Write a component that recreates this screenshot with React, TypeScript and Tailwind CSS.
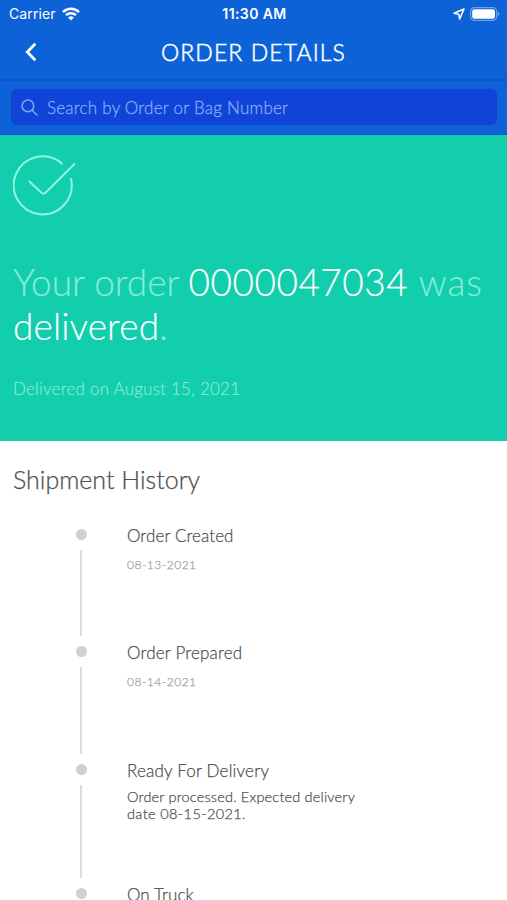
const events = [
  { title: "Order Created", date: "08-13-2021", height: "h-[117px]", tracking: "tracking-[0.1px]" },
  { title: "Order Prepared", date: "08-14-2021", height: "h-[118px]", tracking: "tracking-[0.18px]" },
  {
    title: "Ready For Delivery",
    note: [
      { text: "Order processed. Expected delivery", tracking: "tracking-[0.19px]" },
      { text: "date 08-15-2021.", tracking: "tracking-[0.38px]" },
    ],
    height: "h-[124px]",
    tracking: "tracking-[0.2px]",
  },
  { title: "On Truck", height: "h-[117px]", tracking: "tracking-[0.1px]" },
]

function StatusBar() {
  return (
    <div className="grid h-[27px] grid-cols-3 items-center pr-[7px] pl-[9px] font-['Inter','Liberation_Sans',sans-serif] text-white">
      <div className="flex items-center gap-[6px]">
        <span className="text-[14px] leading-[18px] tracking-[0.1px]">Carrier</span>
        <svg width="18" height="14" viewBox="0 0 18 14" fill="none" stroke="currentColor" strokeWidth="2.5">
          <path d="M1 5.1a11.4 11.4 0 0 1 16 0" />
          <path d="M4 8.2a7.2 7.2 0 0 1 10 0" />
          <path d="M9 13.5 6.2 10.7a4 4 0 0 1 5.6 0Z" fill="currentColor" stroke="none" />
        </svg>
      </div>
      <span className="text-center text-[14px] leading-[18px] font-semibold tracking-[0.4px] whitespace-nowrap">11:30 AM</span>
      <div className="flex items-center justify-end gap-[5px]">
        <svg width="12" height="12" viewBox="0 0 12 12" fill="none" stroke="currentColor" strokeWidth="1.5" strokeLinejoin="round">
          <path d="M11 1 1 5.3l4.8.9.9 4.8Z" />
        </svg>
        <svg width="30" height="14" viewBox="0 0 30 14">
          <rect x="0.6" y="0.6" width="26" height="12.8" rx="3.8" fill="none" stroke="#fff" strokeOpacity="0.4" strokeWidth="1.2" />
          <rect x="2.2" y="2.2" width="22.8" height="9.6" rx="2.4" fill="#fff" />
          <path d="M27.8 4.8v4.4q1.5-.7 1.5-2.2t-1.5-2.2Z" fill="#fff" fillOpacity="0.45" />
        </svg>
      </div>
    </div>
  )
}

function Header() {
  return (
    <header className="h-[135px] border-b border-[#0b55cf] bg-[#0e62d8]">
      <StatusBar />
      <div className="grid h-[54px] grid-cols-[60px_1fr_60px] items-center border-b-2 border-[#0b58ce] pb-[2px]">
        <button className="ml-[25px] w-[12px]">
          <svg width="12" height="20" viewBox="0 0 12 20" fill="none" stroke="#fff" strokeWidth="2.8">
            <path d="M10.3 1.8 2.3 10l8 8.2" />
          </svg>
        </button>
        <h1 className="text-center text-[23px] leading-[30px] font-light tracking-[1.1px] whitespace-nowrap text-white [-webkit-text-stroke:0.5px_currentColor]">
          ORDER DETAILS
        </h1>
      </div>
      <div className="mr-[10px] ml-[11px] mt-[8px] flex h-[36px] items-center rounded-[6px] bg-[#1043d8] pl-[10px] text-[#83abf4]">
        <svg width="17" height="17" viewBox="0 0 17 17" fill="none" stroke="currentColor" strokeWidth="1.5" strokeLinecap="round">
          <circle cx="6.9" cy="6.9" r="5.8" />
          <path d="m11.2 11.2 4.8 4.8" />
        </svg>
        <span className="ml-[9px] pt-px text-[17px] leading-[22px] font-light tracking-[0.23px] whitespace-nowrap [-webkit-text-stroke:0.3px_currentColor]">
          Search by Order or Bag Number
        </span>
      </div>
    </header>
  )
}

function OrderStatus() {
  return (
    <section className="h-[306px] bg-[#13ceac] pt-[19px] pl-[13px] font-light text-[#86ecd5]">
      <svg width="64" height="62" viewBox="0 0 64 62" fill="none" stroke="#8ff5df" strokeWidth="2" strokeLinecap="round" strokeLinejoin="round">
        <path d="M49 9.7A29 29 0 1 0 58 25" />
        <path d="m16.5 27.5 12 11.2q2 1.5 4 0L61.5 10" />
      </svg>
      <h2 className="mt-[44px] text-[37px] leading-[44px] whitespace-nowrap [-webkit-text-stroke:0.15px_currentColor]">
        <span className="tracking-[-0.05px]">Your order </span>
        <span className="tracking-[0.5px] text-white">0000047034</span>
        <span className="tracking-[0.9px]"> was</span>
        <br />
        <span className="tracking-[0.1px] text-white">delivered</span>.
      </h2>
      <p className="mt-[29px] text-[17px] leading-[24px] tracking-[0.22px] [-webkit-text-stroke:0.2px_currentColor]">
        Delivered on August 15, 2021
      </p>
    </section>
  )
}

export default function App() {
  return (
    <div className="h-[900px] w-[507px] overflow-hidden bg-white font-['Lato','Open_Sans',sans-serif]">
      <Header />
      <OrderStatus />
      <section className="pl-[13px] font-light text-[#505050] [-webkit-text-stroke:0.25px_currentColor]">
        <h3 className="pt-[22px] text-[25px] leading-[32px]">Shipment History</h3>
        <ul className="mt-[29px] pl-[62px]">
          {events.map((event) => (
            <li key={event.title} className={`flex ${event.height}`}>
              <div className="flex w-[12px] flex-col items-center pt-[5px]">
                <span className="size-[11px] shrink-0 rounded-full bg-[#d0d0d0]" />
                <span className="mt-[10px] mb-[5px] w-[1.5px] flex-1 bg-[#dcdcdc]" />
              </div>
              <div className="ml-[40px]">
                <p className={`text-[17px] leading-[24px] whitespace-nowrap ${event.tracking}`}>{event.title}</p>
                {event.date && <p className="mt-[9px] text-[12px] leading-[16px] tracking-[0.5px] text-[#a0a0a0]">{event.date}</p>}
                {event.note && (
                  <div className="mt-[5px] text-[14.5px] leading-[17px] whitespace-nowrap">
                    {event.note.map((line) => (
                      <p key={line.text} className={line.tracking}>{line.text}</p>
                    ))}
                  </div>
                )}
              </div>
            </li>
          ))}
        </ul>
      </section>
    </div>
  )
}
